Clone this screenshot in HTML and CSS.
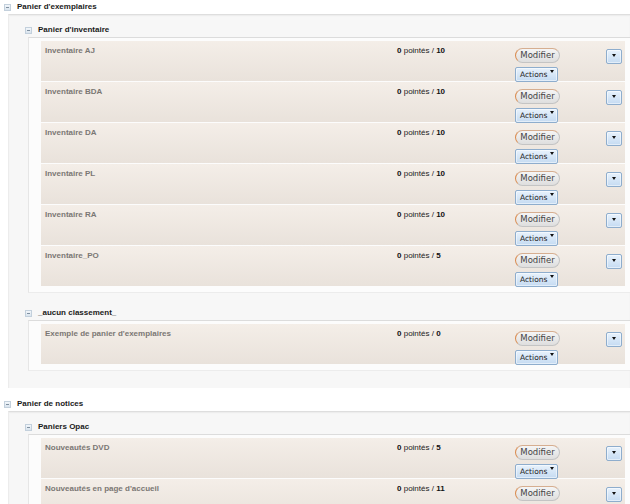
FILE: index.html
```html
<!DOCTYPE html>
<html lang="fr">
<head>
<meta charset="utf-8">
<title>Paniers</title>
<link rel="stylesheet" href="styles.css">
</head>
<body>
<div class="cat">
  <div class="cat-head"><span class="tog"></span>Panier d'exemplaires</div>
  <div class="cat-box">
    <div class="grp">
      <div class="grp-head"><span class="tog"></span>Panier d'inventaire</div>
      <div class="grp-box">
        <div class="row"><div class="name">Inventaire AJ</div><div class="pts"><b>0</b> pointés / <b>10</b></div><div class="btns"><button class="mod">Modifier</button><button class="act">Actions<span class="caret"></span></button></div><div class="dd"><button class="ddb"><span class="caret"></span></button></div></div>
        <div class="row"><div class="name">Inventaire BDA</div><div class="pts"><b>0</b> pointés / <b>10</b></div><div class="btns"><button class="mod">Modifier</button><button class="act">Actions<span class="caret"></span></button></div><div class="dd"><button class="ddb"><span class="caret"></span></button></div></div>
        <div class="row"><div class="name">Inventaire DA</div><div class="pts"><b>0</b> pointés / <b>10</b></div><div class="btns"><button class="mod">Modifier</button><button class="act">Actions<span class="caret"></span></button></div><div class="dd"><button class="ddb"><span class="caret"></span></button></div></div>
        <div class="row"><div class="name">Inventaire PL</div><div class="pts"><b>0</b> pointés / <b>10</b></div><div class="btns"><button class="mod">Modifier</button><button class="act">Actions<span class="caret"></span></button></div><div class="dd"><button class="ddb"><span class="caret"></span></button></div></div>
        <div class="row"><div class="name">Inventaire RA</div><div class="pts"><b>0</b> pointés / <b>10</b></div><div class="btns"><button class="mod">Modifier</button><button class="act">Actions<span class="caret"></span></button></div><div class="dd"><button class="ddb"><span class="caret"></span></button></div></div>
        <div class="row"><div class="name">Inventaire_PO</div><div class="pts"><b>0</b> pointés / <b>5</b></div><div class="btns"><button class="mod">Modifier</button><button class="act">Actions<span class="caret"></span></button></div><div class="dd"><button class="ddb"><span class="caret"></span></button></div></div>
      </div>
    </div>
    <div class="grp grp-next">
      <div class="grp-head"><span class="tog"></span>_aucun classement_</div>
      <div class="grp-box">
        <div class="row"><div class="name">Exemple de panier d'exemplaires</div><div class="pts"><b>0</b> pointés / <b>0</b></div><div class="btns"><button class="mod">Modifier</button><button class="act">Actions<span class="caret"></span></button></div><div class="dd"><button class="ddb"><span class="caret"></span></button></div></div>
      </div>
    </div>
  </div>
</div>
<div class="cat cat-next">
  <div class="cat-head"><span class="tog"></span>Panier de notices</div>
  <div class="cat-box">
    <div class="grp">
      <div class="grp-head"><span class="tog"></span>Paniers Opac</div>
      <div class="grp-box">
        <div class="row"><div class="name">Nouveautés DVD</div><div class="pts"><b>0</b> pointés / <b>5</b></div><div class="btns"><button class="mod">Modifier</button><button class="act">Actions<span class="caret"></span></button></div><div class="dd"><button class="ddb"><span class="caret"></span></button></div></div>
        <div class="row"><div class="name">Nouveautés en page d'accueil</div><div class="pts"><b>0</b> pointés / <b>11</b></div><div class="btns"><button class="mod">Modifier</button><button class="act">Actions<span class="caret"></span></button></div><div class="dd"><button class="ddb"><span class="caret"></span></button></div></div>
      </div>
    </div>
  </div>
</div>
</body>
</html>
```
FILE: styles.css
```css
html, body {
  margin: 0;
  padding: 0;
  background: #ffffff;
  font-family: "Liberation Sans", Arial, sans-serif;
  font-size: 8px;
  color: #222;
  overflow: hidden;
}

.cat-next { margin-top: 9px; }

.cat-head, .grp-head {
  height: 14px;
  line-height: 14px;
  font-weight: bold;
  color: #1a1a1a;
  display: flex;
  align-items: center;
  white-space: nowrap;
}
.cat-head { padding-left: 4px; }
.grp-head { margin-left: 16px; }

.tog {
  position: relative;
  width: 5px;
  height: 5px;
  margin-right: 6px;
  border: 1px solid #c3d0dc;
  background: linear-gradient(#f2f6fa, #d9e4ee);
  flex: none;
}
.tog::after {
  content: "";
  position: absolute;
  left: 1px;
  top: 2px;
  width: 3px;
  height: 1px;
  background: #8090a0;
}

.cat-box {
  margin-left: 8px;
  padding: 8px 0 17px 0;
  background: #f7f7f7;
  border-top: 1px solid #dedede;
  border-left: 1px solid #ececec;
  box-shadow: inset 0 1px 1px #ececec;
}

.grp-next { margin-top: 13px; }

.grp-box {
  margin-left: 19px;
  padding: 3px 5px 5px 12px;
  background: #fcfcfc;
  border-top: 1px solid #dcdcdc;
  border-left: 1px solid #e6e6e6;
  border-bottom: 1px solid #ececec;
}

.row {
  display: grid;
  grid-template-columns: 352px 118px 91px 24px;
  height: 40px;
  margin-bottom: 1px;
  background: linear-gradient(#f4eee8, #e9e2db);
}

.name, .pts {
  padding: 5px 0 0 4px;
  line-height: 10px;
  white-space: nowrap;
}
.name {
  font-weight: bold;
  color: #7b7774;
}
.pts { color: #222; }
.pts b { color: #111; }

.btns {
  padding: 7px 0 0 4px;
  display: flex;
  flex-direction: column;
  align-items: flex-start;
  gap: 4px;
}

.mod {
  width: 45px;
  height: 15px;
  padding: 0;
  border: 1px solid #c4c4c4;
  border-left-color: #d98a4e;
  border-top-color: #d6ae90;
  border-radius: 8px;
  background: linear-gradient(#f5f5f5, #dedede);
  font-family: "DejaVu Sans", Verdana, sans-serif;
  font-size: 8.5px;
  line-height: 13px;
  color: #444;
}

.act, .ddb {
  position: relative;
  height: 15px;
  padding: 0;
  border: 1px solid #8eadcd;
  border-radius: 2px;
  background: linear-gradient(#e8f2fc, #c5dbf2);
  box-shadow: inset 0 0 0 1px rgba(255,255,255,0.5);
  color: #222;
}
.act {
  width: 43px;
  font-family: "DejaVu Sans", Verdana, sans-serif;
  font-size: 7.5px;
  line-height: 13px;
  text-align: left;
  padding-left: 4px;
}
.act .caret {
  position: absolute;
  right: 3px;
  top: 2px;
}
.caret {
  display: block;
  width: 0;
  height: 0;
  border-left: 2.5px solid transparent;
  border-right: 2.5px solid transparent;
  border-top: 3px solid #111;
}

.dd {
  padding: 8px 0 0 4px;
}
.ddb {
  width: 16px;
  display: block;
}
.ddb .caret {
  position: absolute;
  left: 5px;
  top: 4px;
}
```
